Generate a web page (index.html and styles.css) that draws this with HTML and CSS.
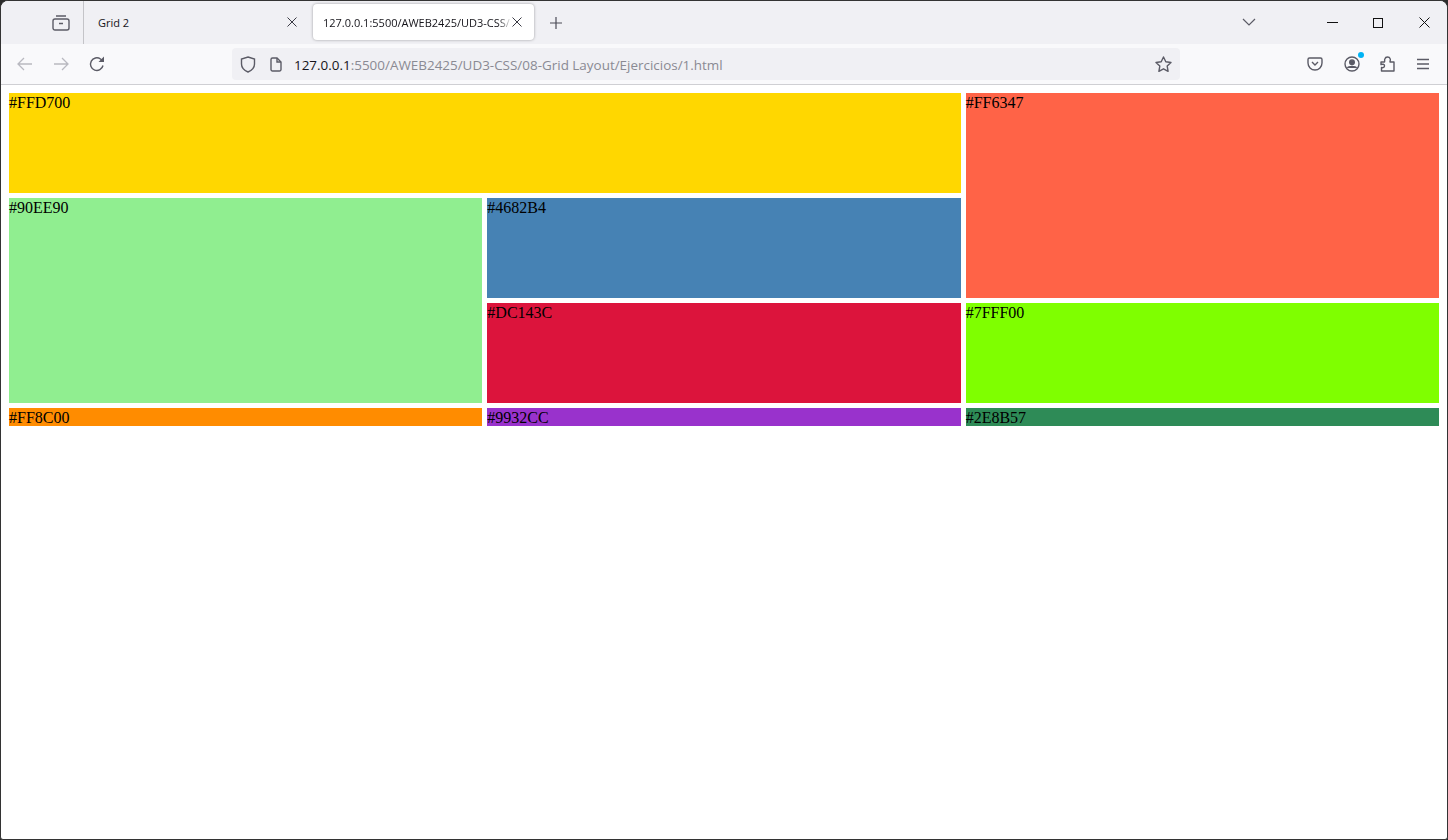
FILE: index.html
```html
<!DOCTYPE html>
<html>
<head>
  <title>Grid 2</title>
  <link rel="stylesheet" href="styles.css">
</head>
<body>
  <div class="window">
    <!-- tabs -->
    <div class="tabbar">
      <div class="view-btn">
        <svg width="18" height="16" viewBox="0 0 18 16" fill="none" stroke="#5b5b66" stroke-width="1.4"><path d="M4 1h10"/><rect x="1" y="4" width="16" height="11" rx="2"/><path d="M7 8.500h4"/></svg>
      </div>
      <div class="tab">
        <span class="tab-title">Grid 2</span>
        <svg class="tab-close" width="10" height="10" viewBox="0 0 10 10" stroke="#3a3a44" stroke-width="1"><path d="M.5.5l9 9M9.500.5l-9 9"/></svg>
      </div>
      <div class="tab tab-active">
        <span class="tab-title">127.0.0.1:5500/AWEB2425/UD3-CSS/</span>
        <svg class="tab-close" width="10" height="10" viewBox="0 0 10 10" stroke="#3a3a44" stroke-width="1"><path d="M.5.5l9 9M9.500.5l-9 9"/></svg>
      </div>
      <svg class="new-tab" width="12" height="12" viewBox="0 0 12 12" stroke="#4a4a55" stroke-width="1.2"><path d="M6 0v12M0 6h12"/></svg>
      <div class="tabbar-right">
        <svg class="tab-list" width="14" height="8" viewBox="0 0 14 8" fill="none" stroke="#5b5b66" stroke-width="1.2"><path d="M1 1l6 6 6-6"/></svg>
        <div class="win-btn"><svg width="11" height="11" viewBox="0 0 11 11" stroke="#111" stroke-width="1"><path d="M0 5.500h11"/></svg></div>
        <div class="win-btn"><svg width="10" height="10" viewBox="0 0 10 10" fill="none" stroke="#111" stroke-width="1"><rect x=".5" y=".5" width="9" height="9"/></svg></div>
        <div class="win-btn"><svg width="11" height="11" viewBox="0 0 11 11" stroke="#111" stroke-width="1"><path d="M.5.5l10 10M10.500.5l-10 10"/></svg></div>
      </div>
    </div>

    <!-- toolbar -->
    <div class="toolbar">
      <div class="nav-btns">
        <svg width="16" height="14" viewBox="0 0 16 14" fill="none" stroke="#b9b9c0" stroke-width="1.3"><path d="M15 7H1M7 1L1 7l6 6"/></svg>
        <svg width="16" height="14" viewBox="0 0 16 14" fill="none" stroke="#b9b9c0" stroke-width="1.3"><path d="M1 7h14M9 1l6 6-6 6"/></svg>
        <svg width="16" height="16" viewBox="0 0 16 16" fill="none" stroke="#5b5b66" stroke-width="1.4"><path d="M14 9.500A6.300 6.300 0 1 1 11.500 3L14 5"/><path d="M15 .5v5.500H9.500z" fill="#5b5b66" stroke="none"/></svg>
      </div>
      <div class="urlbar">
        <svg width="16" height="17" viewBox="0 0 16 17" fill="none" stroke="#5b5b66" stroke-width="1.4"><path d="M8 1l6.500 2v5c0 4-3 6.500-6.500 8C4.500 14.500 1.500 12 1.500 8V3z"/></svg>
        <svg class="page-icon" width="12" height="15" viewBox="0 0 12 15" fill="none" stroke="#5b5b66" stroke-width="1.4"><path d="M1 2.500A1.500 1.500 0 0 1 2.500 1H7l4 4v7.500a1.500 1.500 0 0 1-1.500 1.500h-7A1.500 1.500 0 0 1 1 12.500z"/><path d="M7 1v4h4"/></svg>
        <span class="url"><span class="url-host">127.0.0.1</span>:5500/AWEB2425/UD3-CSS/08-Grid Layout/Ejercicios/1.html</span>
        <svg class="star" width="17" height="16" viewBox="0 0 17 16" fill="none" stroke="#5b5b66" stroke-width="1.4" stroke-linejoin="round"><path d="M8.500 1l2.300 4.700 5.200.8-3.800 3.600.9 5.200-4.600-2.500-4.600 2.500.9-5.200L1 6.500l5.200-.8z"/></svg>
      </div>
      <div class="tools">
        <svg width="16" height="14" viewBox="0 0 16 14" fill="none" stroke="#5b5b66" stroke-width="1.400"><path d="M1 2.500A1.500 1.500 0 0 1 2.500 1h11A1.500 1.500 0 0 1 15 2.500V6a7 7 0 0 1-14 0z"/><path d="M5 5l3 3 3-3"/></svg>
        <div class="account">
          <svg width="16" height="16" viewBox="0 0 16 16" fill="none" stroke="#5b5b66" stroke-width="1.4"><circle cx="8" cy="8" r="7"/><circle cx="8" cy="6.200" r="2.300" fill="#5b5b66"/><path d="M3.500 12c1-2 8-2 9 0" fill="#5b5b66"/></svg>
          <span class="badge"></span>
        </div>
        <svg width="15" height="16" viewBox="0 0 15 16" fill="none" stroke="#5b5b66" stroke-width="1.4" stroke-linejoin="round"><path d="M1 6h3.500c.5-1-.2-1.800.3-3C5.300 1.500 6.500 1 7.500 1s2.200.5 2.700 1.800c.5 1.200-.2 2-.2 3.200h4v9H1.500v-3.500c1.500.5 3 0 3-1.800S2.500 8 1 8.500z"/></svg>
        <svg width="14" height="12" viewBox="0 0 14 12" stroke="#5b5b66" stroke-width="1.3"><path d="M1 1.500h12M1 6h12M1 10.500h12"/></svg>
      </div>
    </div>

    <!-- page content -->
    <div class="page">
      <div class="grid">
        <div class="item item-gold">#FFD700</div>
        <div class="item item-tomato">#FF6347</div>
        <div class="item item-green">#90EE90</div>
        <div class="item item-blue">#4682B4</div>
        <div class="item item-crimson">#DC143C</div>
        <div class="item item-chartreuse">#7FFF00</div>
        <div class="item item-orange">#FF8C00</div>
        <div class="item item-orchid">#9932CC</div>
        <div class="item item-sea">#2E8B57</div>
      </div>
    </div>
  </div>
</body>
</html>
```

FILE: styles.css
```css
html {
  background-color: #2b2b2b;
}

body {
  margin: 0;
  height: 840px;
  overflow: hidden;
}

.window {
  height: 100%;
  box-sizing: border-box;
  border: 1px solid #333;
  border-radius: 8px 8px 3px 3px;
  background-color: white;
  display: flex;
  flex-direction: column;
  overflow: hidden;
}

/* tabs */
.tabbar {
  height: 43px;
  flex: none;
  background-color: #f0f0f4;
  display: flex;
  align-items: center;
  font-family: "Open Sans", sans-serif;
  font-size: 11px;
  color: #15141a;
}

.view-btn {
  width: 83px;
  height: 43px;
  box-sizing: border-box;
  padding-left: 51px;
  border-right: 1px solid #c4c4c8;
  display: flex;
  align-items: center;
}

.tab {
  width: 221px;
  height: 36px;
  box-sizing: border-box;
  padding: 0 16px 0 14px;
  display: flex;
  align-items: center;
  justify-content: space-between;
  margin-bottom: 1px;
}

.tab:nth-child(2) {
  width: 229px;
}

.tab-active {
  background-color: white;
  border-radius: 4px;
  padding: 0 12px 0 10px;
  box-shadow: 0 0 3px rgba(0, 0, 0, 0.35);
}

.tab-title {
  white-space: nowrap;
  flex: 1;
}

.tab-active .tab-title {
  -webkit-mask-image: linear-gradient(to left, transparent 0, black 14px);
  mask-image: linear-gradient(to left, transparent 0, black 14px);
}

.tab-close {
  flex: none;
}

.new-tab {
  margin-left: 16px;
}

.tabbar-right {
  margin-left: auto;
  display: flex;
  align-items: center;
}

.tab-list {
  margin-right: 53px;
  margin-bottom: 2px;
}

.win-btn {
  width: 46px;
  display: flex;
  justify-content: center;
}

/* toolbar */
.toolbar {
  height: 41px;
  flex: none;
  box-sizing: border-box;
  background-color: #f9f9fb;
  border-bottom: 1px solid #cfcfd3;
  display: flex;
  align-items: center;
}

.nav-btns {
  width: 231px;
  box-sizing: border-box;
  padding-left: 16px;
  display: flex;
  align-items: center;
  gap: 20px;
}

.urlbar {
  width: 948px;
  height: 32px;
  box-sizing: border-box;
  padding: 0 8px;
  background-color: #f0f0f4;
  border-radius: 4px;
  display: flex;
  align-items: center;
  font-family: "Open Sans", sans-serif;
  font-size: 13.45px;
  color: #8a8a93;
}

.page-icon {
  margin-left: 14px;
}

.url {
  margin-left: 12px;
  margin-top: 2px;
  white-space: nowrap;
}

.url-host {
  color: #15141a;
}

.star {
  margin-left: auto;
}

.tools {
  flex: 1;
  box-sizing: border-box;
  padding: 0 17px 0 127px;
  display: flex;
  align-items: center;
  justify-content: space-between;
}

.account {
  position: relative;
  height: 16px;
}

.badge {
  position: absolute;
  top: -4px;
  right: -4px;
  width: 6px;
  height: 6px;
  border-radius: 50%;
  background-color: #00b3f4;
}

/* page content */
.page {
  flex: 1;
  padding: 8px;
}

.grid {
  display: grid;
  grid-template-columns: repeat(3, 1fr);
  grid-template-rows: 100px 100px 100px 18px;
  gap: 5px;
  font-family: "Liberation Serif", serif;
  font-size: 16px;
  line-height: 20px;
  color: black;
}

.item-gold { grid-column: 1 / 3; background-color: #FFD700; }
.item-tomato { grid-row: 1 / 3; grid-column: 3; background-color: #FF6347; }
.item-green { grid-row: 2 / 4; background-color: #90EE90; }
.item-blue { background-color: #4682B4; }
.item-crimson { background-color: #DC143C; }
.item-chartreuse { background-color: #7FFF00; }
.item-orange { background-color: #FF8C00; }
.item-orchid { background-color: #9932CC; }
.item-sea { background-color: #2E8B57; }
```
